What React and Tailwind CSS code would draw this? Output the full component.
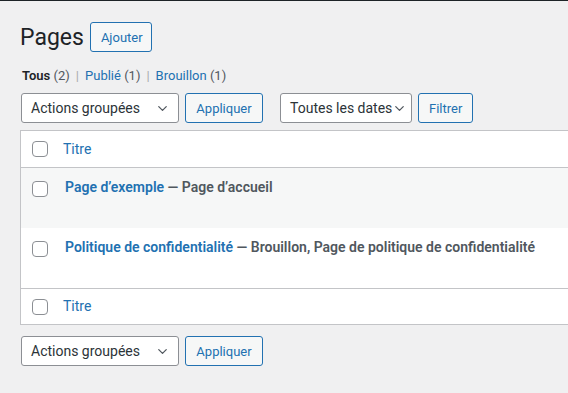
import { ChevronDown } from "lucide-react";

function Checkbox() {
  return <span className="block w-4 h-4 rounded-[4px] border border-[#8c8f94] bg-white shrink-0" />;
}

function Select({ label, width }) {
  return (
    <div
      className={`flex items-center justify-between h-[30px] pl-[9px] pr-[8px] border border-[#8c8f94] rounded-[3px] bg-white text-[14px] text-[#2c3338] whitespace-nowrap ${width}`}
    >
      <span>{label}</span>
      <ChevronDown size={15} strokeWidth={2} className="text-[#50575e] shrink-0" />
    </div>
  );
}

function Button({ children, className = "" }) {
  return (
    <button
      className={`h-[30px] px-[10px] border border-[#2271b1] rounded-[3px] bg-[#f6f7f7] text-[13px] text-[#2271b1] leading-none ${className}`}
    >
      {children}
    </button>
  );
}

function Row({ title, state, striped }) {
  return (
    <div className={`flex h-[60px] pt-[10px] ${striped ? "bg-[#f6f7f7]" : "bg-white"}`}>
      <div className="pl-[11px] pr-[17px] pt-[3px]">
        <Checkbox />
      </div>
      <div className="text-[14px] font-semibold leading-[18px] whitespace-nowrap">
        <a className="text-[#2271b1]">{title}</a>
        <span className="text-[#50575e]"> — {state}</span>
      </div>
    </div>
  );
}

export default function App() {
  return (
    <div
      className="w-[568px] h-[393px] overflow-hidden bg-[#f0f0f1] border-t border-[#1d2327]"
      style={{ fontFamily: 'Roboto, "Noto Sans", sans-serif' }}
    >
      <div className="pl-[20px]">
        <div className="flex items-center gap-[6px] pt-[21px]">
          <h1 className="text-[23px] text-[#1d2327] leading-[29px]">Pages</h1>
          <Button className="h-[26px] w-[62px] px-0">Ajouter</Button>
        </div>

        <div className="flex items-center gap-[6px] mt-[15px] text-[13px] text-[#50575e] leading-[18px] pl-[2px]">
          <span>
            <span className="font-semibold text-[#1d2327]">Tous</span> (2)
          </span>
          <span className="text-[#a7aaad]">|</span>
          <span className="text-[#2271b1]">Publié <span className="text-[#50575e]">(1)</span></span>
          <span className="text-[#a7aaad]">|</span>
          <span className="text-[#2271b1]">Brouillon <span className="text-[#50575e]">(1)</span></span>
        </div>

        <div className="flex items-center mt-[8px] pl-[1px]">
          <Select label="Actions groupées" width="w-[158px]" />
          <Button className="ml-[6px] w-[78px]">Appliquer</Button>
          <Select label="Toutes les dates" width="w-[132px] ml-[17px]" />
          <Button className="ml-[6px] w-[55px]">Filtrer</Button>
        </div>

        <div className="mt-[7px] w-[620px] border border-[#c3c4c7] bg-white">
          <div className="flex items-center h-[37px] border-b border-[#c3c4c7]">
            <div className="pl-[11px] pr-[15px]">
              <Checkbox />
            </div>
            <a className="text-[14px] text-[#2271b1]">Titre</a>
          </div>
          <Row title="Page d’exemple" state="Page d’accueil" striped />
          <Row title="Politique de confidentialité" state="Brouillon, Page de politique de confidentialité" />
          <div className="flex items-center h-[36px] border-t border-[#c3c4c7]">
            <div className="pl-[11px] pr-[15px]">
              <Checkbox />
            </div>
            <a className="text-[14px] text-[#2271b1]">Titre</a>
          </div>
        </div>

        <div className="flex items-center mt-[11px] pl-[1px]">
          <Select label="Actions groupées" width="w-[158px]" />
          <Button className="ml-[6px] w-[78px]">Appliquer</Button>
        </div>
      </div>
    </div>
  );
}
